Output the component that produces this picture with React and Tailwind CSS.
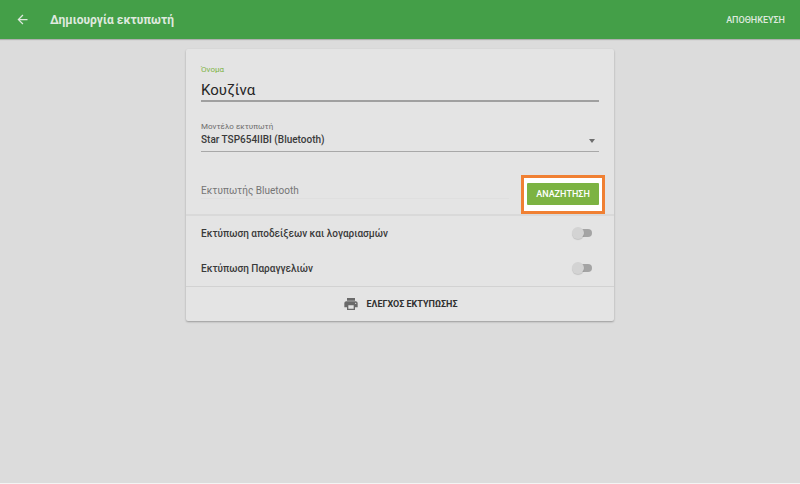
import { useState } from "react";

function Toggle({ id, label }) {
  const [on, setOn] = useState(false);
  return (
    <div className="flex h-[35px] items-center justify-between pr-[7px]">
      <label htmlFor={id} className="text-[10px] font-medium leading-4 text-[#3a3a3a]">
        {label}
      </label>
      <span className="relative mb-px flex h-3 w-5 items-center">
        <input
          id={id}
          type="checkbox"
          role="switch"
          checked={on}
          onChange={() => setOn(!on)}
          className="peer ml-auto h-2 w-4 appearance-none rounded-full bg-[#a4a4a4] checked:bg-[#a5cf7b]"
        />
        <span className="pointer-events-none absolute left-0 top-0 size-3 rounded-full bg-[#d3d3d3] shadow-[0_1px_1px_rgba(0,0,0,0.15)] peer-checked:left-2 peer-checked:bg-[#7cb342]" />
      </span>
    </div>
  );
}

export default function App() {
  return (
    <div className="flex min-h-screen flex-col border-b border-[#f4f4f4] bg-[#dcdcdc] font-[Roboto,'Noto_Sans',sans-serif] text-[#303030]">
      <header className="flex h-[39px] items-center bg-[#449f48] pl-[15px] pr-[15px] text-[#dfe9df] shadow-[0_1px_1px_rgba(0,0,0,0.2)]">
        <button type="button" aria-label="Πίσω" className="mr-5">
          <svg viewBox="0 0 24 24" className="size-[15px]" fill="currentColor">
            <path d="M20 11H7.83l5.59-5.59L12 4l-8 8 8 8 1.41-1.41L7.83 13H20v-2z" />
          </svg>
        </button>
        <h1 className="text-[12px] font-bold leading-4">Δημιουργία εκτυπωτή</h1>
        <button type="button" className="ml-auto text-[9px] font-medium leading-4">
          ΑΠΟΘΗΚΕΥΣΗ
        </button>
      </header>

      <main className="px-4 pt-[10px]">
        <form
          onSubmit={(e) => e.preventDefault()}
          className="mx-auto max-w-[428px] rounded-xs bg-[#e4e4e4] shadow-[0_1px_2px_rgba(0,0,0,0.3)]"
        >
          <div className="border-b-2 border-[#d9d9d9] px-[15px] pt-4">
            <div className="flex flex-col">
              <label htmlFor="name" className="text-[8px] leading-[10px] text-[#7fb347]">
                Όνομα
              </label>
              <input
                id="name"
                defaultValue="Κουζίνα"
                className="h-[27px] border-b-2 border-[#a0a0a0] pt-1 text-[15px] leading-5 text-[#262626] outline-none"
              />
            </div>

            <div className="flex flex-col pt-5">
              <label htmlFor="model" className="text-[8px] leading-[10px] text-[#6c6c6c]">
                Μοντέλο εκτυπωτή
              </label>
              <div className="relative">
                <select
                  id="model"
                  className="block h-5 w-full appearance-none border-b border-[#a8a8a8] pb-1 text-[10px] font-medium leading-4 text-[#3a3a3a] outline-none"
                >
                  <option>Star TSP654IIBI (Bluetooth)</option>
                </select>
                <svg viewBox="0 0 8 4" className="pointer-events-none absolute right-[3px] top-[7px] h-1 w-2" fill="#6e6e6e">
                  <path d="M1 0h6L4 4z" />
                </svg>
              </div>
            </div>

            <div className="flex items-center gap-3 pt-[23px]">
              <input
                aria-label="Εκτυπωτής Bluetooth"
                placeholder="Εκτυπωτής Bluetooth"
                className="mb-2.5 h-[18px] min-w-0 flex-1 border-b border-[#dfdfdf] pt-0.5 text-[10px] leading-4 outline-none placeholder:text-[#757575]"
              />
              <div className="-mr-1.5 border-3 border-[#f08033] bg-white px-[3px] pb-1.5 pt-[5px]">
                <button
                  type="button"
                  className="block h-[22px] w-[72px] rounded-[1px] bg-[#7cb342] text-[9px] font-medium leading-4 text-white"
                >
                  ΑΝΑΖΗΤΗΣΗ
                </button>
              </div>
            </div>
          </div>

          <div className="border-b border-[#d2d2d2] px-[15px]">
            <Toggle id="receipts" label="Εκτύπωση αποδείξεων και λογαριασμών" />
            <Toggle id="orders" label="Εκτύπωση Παραγγελιών" />
          </div>

          <button
            type="button"
            className="flex h-[34px] w-full items-center justify-center gap-2 text-[9px] font-bold leading-4"
          >
            <svg viewBox="0 0 24 24" className="size-4" fill="#6a6a6a">
              <path d="M19 8H5c-1.66 0-3 1.34-3 3v6h4v4h12v-4h4v-6c0-1.66-1.34-3-3-3zm-3 11H8v-5h8v5zm3-7c-.55 0-1-.45-1-1s.45-1 1-1 1 .45 1 1-.45 1-1 1zm-1-9H6v4h12V3z" />
            </svg>
            ΕΛΕΓΧΟΣ ΕΚΤΥΠΩΣΗΣ
          </button>
        </form>
      </main>
    </div>
  );
}
